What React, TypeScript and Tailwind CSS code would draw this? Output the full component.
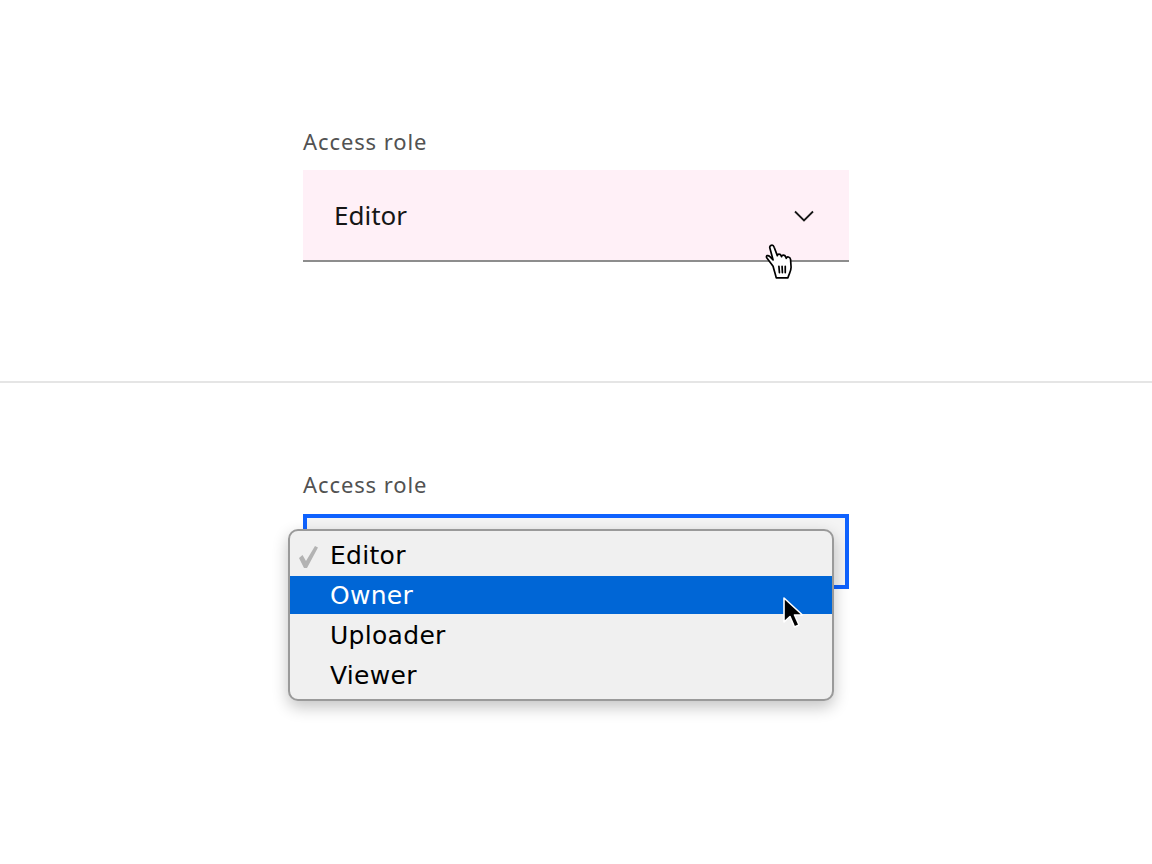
export default function App() {
  return (
    <div className="w-[1152px] h-[864px] bg-white flex flex-col overflow-hidden font-['Noto_Sans',sans-serif]">
      <section className="h-[381px] shrink-0 pl-[303px] pt-[127px]">
        <div className="h-[28px] text-[22px] leading-[28px] text-[#525252] tracking-[0.9px]">Access role</div>
        <div className="relative mt-[15px] w-[546px] h-[92px] bg-[#fff0f7] border-b-2 border-[#8d8d8d] flex items-center justify-between pl-[31px] pr-[35px]">
          <span className="text-[26px] text-[#161616] tracking-[0px]">Editor</span>
          <svg className="mt-[2px]" width="20" height="12" viewBox="0 0 20 12" fill="none" stroke="#161616" strokeWidth="1.8"><path d="M1 1.5 L10 10.5 L19 1.5" /></svg>
          <svg className="absolute left-[461px] top-[74px]" width="33" height="36" viewBox="0 0 30 34" fill="#fff" stroke="#000" strokeWidth="1.6" strokeLinejoin="round" strokeLinecap="round">
            <path d="M8 21 L2 13 C1 11 3 10 5 12 L8 15 L5 4 C4 1 8 0 9 3 L12 11 C12 9 15 9 15.5 11 L16 12 C16 10 19.5 10 20 12.5 L20.5 13.5 C21 11.5 24 12 24.5 14.5 L25 22 C25 26 23 28 22 32 L11 32 C10 28 9 25 8 21 Z" />
            <path d="M13.5 21 L14 27 M16.5 21 L16.8 27 M19.5 21 L19.5 27" />
          </svg>
        </div>
      </section>
      <div className="h-[2px] shrink-0 bg-[#e5e5e5]" />
      <section className="flex-1 pl-[303px] pt-[87px]">
        <div className="h-[28px] text-[22px] leading-[28px] text-[#525252] tracking-[0.9px]">Access role</div>
        <div className="relative mt-[16px] w-[546px] h-[75px] bg-[#f4f4f4] border-[4px] border-[#0f62fe]">
          <div className="absolute left-[-19px] top-[11px] w-[546px] h-[172px] rounded-[10px] bg-[#f0f0f0] border-2 border-[#9a9a9a] shadow-[0_6px_16px_rgba(0,0,0,0.24)] py-[5px] font-['DejaVu_Sans',sans-serif] text-[25px] text-black tracking-[0.3px]">
            <div className="relative h-[39px] flex items-center pl-[40px] pb-[1px] pt-[1px]">
              <svg className="absolute left-[8px] top-[9px]" width="22" height="24" viewBox="0 0 22 24" fill="#b3b3b3"><path d="M1 13 L4.5 10 L8 16 L17 1 L20 2.5 L9 23 L6 23 Z" /></svg>
              Editor
            </div>
            <div className="h-[38px] mt-[1px] mb-[2px] pt-[2px] bg-[#0066d6] text-white flex items-center pl-[40px]">Owner</div>
            <div className="h-[40px] flex items-center pl-[40px]">Uploader</div>
            <div className="h-[40px] flex items-center pl-[40px]">Viewer</div>
            <svg className="absolute left-[492px] top-[66px]" width="24" height="34" viewBox="0 0 24 34">
              <path d="M2 1 L2 25 L8 19.5 L12.5 30 L17 28 L12.5 18 L20.5 18 Z" fill="#000" stroke="#fff" strokeWidth="1.6" strokeLinejoin="round" />
            </svg>
          </div>
        </div>
      </section>
    </div>
  );
}
